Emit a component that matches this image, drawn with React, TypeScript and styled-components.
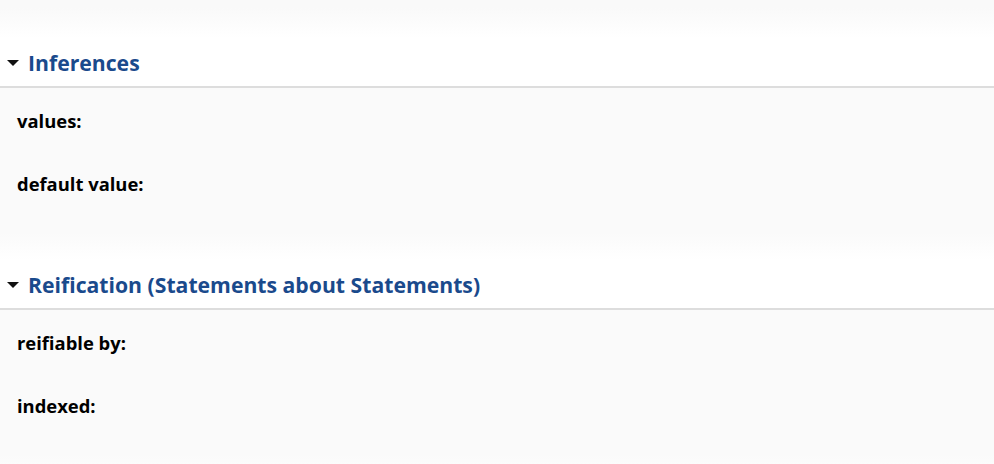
import React from "react";
import styled, { createGlobalStyle } from "styled-components";

const Global = createGlobalStyle`
  html, body { margin: 0; padding: 0; background: #ffffff; }
  body { font-family: "Open Sans", "Noto Sans", sans-serif; }
`;

const Page = styled.div`
  width: 994px;
  display: flex;
  flex-direction: column;
`;

const TopFade = styled.div`
  height: 38px;
  background: linear-gradient(#f9f9f9 0px, #f9f9f9 8px, #ffffff 38px);
`;

const Section = styled.section`
  display: flex;
  flex-direction: column;
`;

const Header = styled.div`
  height: 50px;
  box-sizing: border-box;
  display: flex;
  align-items: center;
  gap: 9px;
  padding: 2px 0 0 7px;
  border-bottom: 2px solid #dddddd;
`;

const Caret = styled.span`
  width: 0;
  height: 0;
  border-left: 6px solid transparent;
  border-right: 6px solid transparent;
  border-top: 6px solid #111;
`;

const Title = styled.h2`
  margin: 0;
  font-size: 21.2px;
  font-weight: 700;
  line-height: 26px;
  color: #1a4a8c;
`;

const Body = styled.div`
  background: #fafafa;
  padding: 20px 17px 36px;
  display: flex;
  flex-direction: column;
  gap: 37px;
`;

const Label = styled.div`
  font-size: 18.4px;
  font-weight: 700;
  line-height: 26px;
  color: #000;
`;

const BottomFade = styled.div`
  height: 27px;
  background: linear-gradient(#fafafa, #ffffff);
`;

const sections = [
  { title: "Inferences", labels: ["values:", "default value:"] },
  { title: "Reification (Statements about Statements)", labels: ["reifiable by:", "indexed:"] },
];

export default function App() {
  return (
    <Page>
      <Global />
      <TopFade />
      {sections.map((s) => (
        <Section key={s.title}>
          <Header>
            <Caret />
            <Title>{s.title}</Title>
          </Header>
          <Body>
            {s.labels.map((l) => (
              <Label key={l}>{l}</Label>
            ))}
          </Body>
          <BottomFade />
        </Section>
      ))}
    </Page>
  );
}
